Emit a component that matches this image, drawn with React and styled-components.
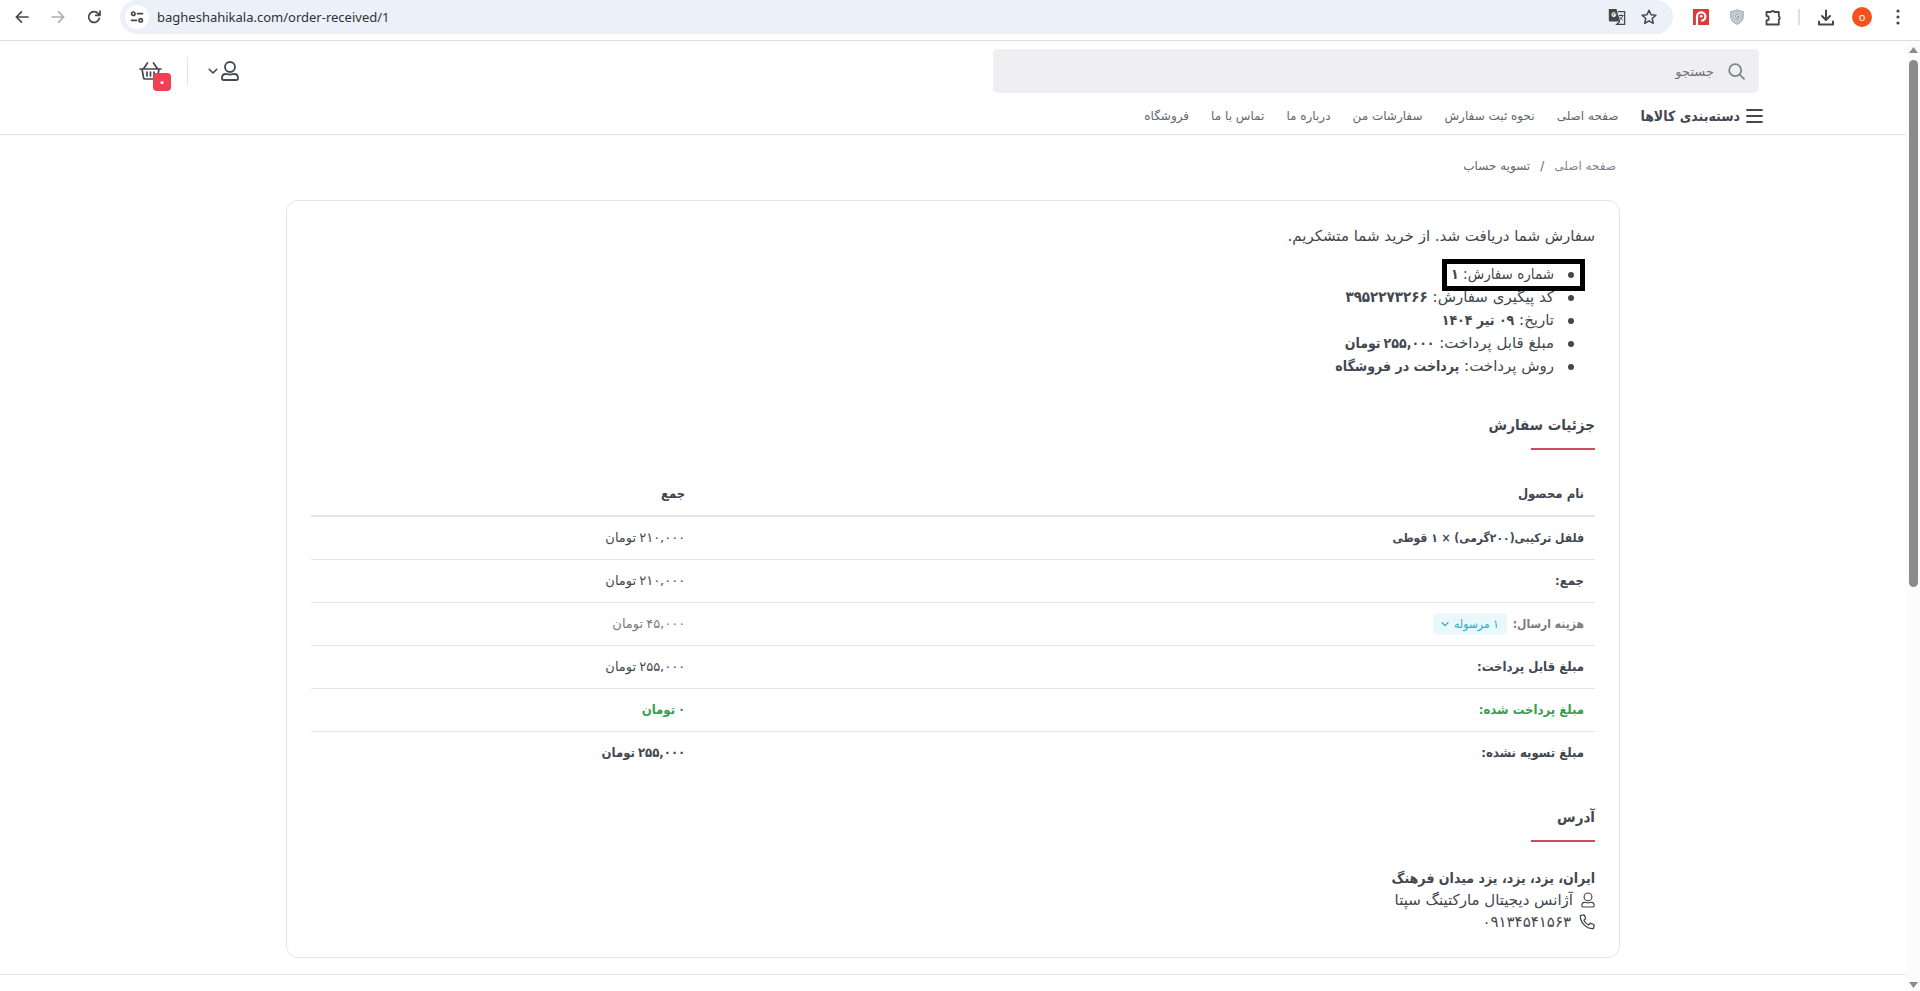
import React from "react";
import styled, { createGlobalStyle } from "styled-components";

const narrow = `"DejaVu Sans Condensed", "DejaVu Sans", sans-serif`;

const GlobalStyle = createGlobalStyle`
  *, *::before, *::after { box-sizing: border-box; }
  body { margin: 0; background: #fff; }
  button, input { font-family: inherit; }
  button { border: 0; padding: 0; background: none; color: inherit; cursor: pointer; }
  svg { display: block; flex: none; }
`;

/* ---------- browser chrome ---------- */

const Window = styled.div`
  height: 100vh;
  display: flex;
  flex-direction: column;
  overflow: hidden;
`;

const BrowserBar = styled.header`
  flex: none;
  display: flex;
  align-items: flex-start;
  height: 41px;
  padding: 0 10px;
  border-bottom: 1px solid #dadce0;
  background: #fff;
  color: #474747;
  font-family: "Noto Sans", "Open Sans", sans-serif;
`;

const BarGroup = styled.div`
  display: flex;
  align-items: center;
  height: 34px;
  gap: ${(p) => p.$gap}px;
`;

const ProfileGroup = styled(BarGroup)`
  padding-left: 2px;
`;

const BarButton = styled.button`
  display: flex;
  align-items: center;
  justify-content: center;
  width: 24px;
  height: 24px;
  border-radius: 50%;
  color: ${(p) => (p.$muted ? "#b0b0b0" : "#474747")};
`;

const Omnibox = styled.div`
  flex: 1;
  display: flex;
  align-items: center;
  height: 34px;
  margin: 0 16px 0 14px;
  padding: 0 12px 0 5px;
  border-radius: 17px;
  background: #ebf0f9;
`;

const SiteButton = styled(BarButton)`
  background: #fff;
`;

const Url = styled.input`
  flex: 1;
  min-width: 0;
  height: 22px;
  margin-left: 8px;
  padding: 0;
  border: 0;
  outline: 0;
  background: none;
  color: #303236;
  font-size: 13px;
  line-height: 20px;
`;

const BarDivider = styled.span`
  width: 2px;
  height: 16px;
  margin: 0 2px 0 1px;
  background: #d5dff0;
`;

const Avatar = styled.button`
  width: 20px;
  height: 20px;
  border-radius: 50%;
  background: #f4511e;
  color: #fff;
  font-size: 11px;
  line-height: 18px;
`;

const Viewport = styled.div`
  flex: 1;
  min-height: 0;
  display: flex;
`;

const ScrollTrack = styled.div`
  flex: none;
  width: 14px;
  display: flex;
  flex-direction: column;
  align-items: center;
  padding: 6px 0 3px;
  background: #fcfcfc;
`;

const ScrollThumb = styled.div`
  width: 9px;
  height: 56%;
  margin: 7px 0 auto;
  border-radius: 5px;
  background: #8b8b8b;
`;

/* ---------- shop page ---------- */

const Page = styled.div`
  flex: 1;
  min-width: 0;
  overflow: hidden;
  color: #424750;
  font-family: "DejaVu Sans", sans-serif;
  font-size: 15px;
  line-height: 22px;
`;

const SiteHeader = styled.header`
  border-bottom: 1px solid #e4e5e7;
  box-shadow: 0 1px 2px rgba(0, 0, 0, 0.03);
`;

const HeaderInner = styled.div`
  max-width: 1628px;
  margin: 0 auto;
`;

const HeaderRow = styled.div`
  display: flex;
  align-items: center;
  justify-content: space-between;
  padding: 8px 8px 0 0;
`;

const Search = styled.form`
  flex: 0 1 766px;
  display: flex;
  align-items: center;
  gap: 14px;
  height: 44px;
  padding: 0 14px;
  border-radius: 5px;
  background: #efeff1;
  color: #81858b;
`;

const SearchInput = styled.input`
  flex: 1;
  min-width: 0;
  padding: 0;
  border: 0;
  outline: 0;
  background: none;
  color: #424750;
  font-size: 13px;
  &::placeholder { color: #6f747b; opacity: 1; }
`;

const Actions = styled.div`
  display: flex;
  align-items: center;
`;

const AccountButton = styled.button`
  display: flex;
  align-items: center;
  gap: 3px;
  color: #424750;
`;

const ActionDivider = styled.span`
  width: 1px;
  height: 29px;
  margin: 0 20px;
  background: #e4e5e7;
`;

const CartButton = styled.button`
  position: relative;
  display: flex;
  width: 28px;
  height: 20px;
  justify-content: flex-end;
  color: #424750;
`;

const CartBadge = styled.span`
  position: absolute;
  left: 14px;
  top: 12px;
  width: 18px;
  height: 18px;
  border-radius: 4px;
  background: #ef4056;
  color: #fff;
  font-size: 15px;
  font-weight: 700;
  line-height: 18px;
  text-align: center;
`;

const Nav = styled.nav`
  display: flex;
  align-items: center;
  gap: 22px;
  height: 41px;
  padding: 5px 4px 0 0;
`;

const CategoryButton = styled.button`
  display: flex;
  align-items: center;
  gap: 6px;
  color: #424750;
  font-family: ${narrow};
  font-size: 14px;
  font-weight: 700;
`;

const NavLink = styled.a`
  color: #62666d;
  font-size: 12px;
  text-decoration: none;
  white-space: nowrap;
`;

const Container = styled.main`
  max-width: 1334px;
  margin: 0 auto;
`;

const Breadcrumb = styled.nav`
  display: flex;
  gap: 10px;
  padding: 20px 4px 0;
  font-size: 12px;
  color: #62666d;
`;

const Crumb = styled.a`
  color: #81858b;
  text-decoration: none;
`;

const Card = styled.section`
  margin: 23px 0 16px;
  padding: 24px;
  border: 1px solid #e4e5e7;
  border-radius: 12px;
`;

const Notice = styled.p`
  margin: 0 0 16px;
`;

const Summary = styled.ul`
  margin: 0 0 35px;
  padding: 0 21px 0 0;
  list-style: none;
  line-height: 23px;
`;

const SummaryItem = styled.li`
  position: relative;
  height: 23px;
  ${(p) => p.$narrow && `font-family: ${narrow};`}
  &::before {
    content: "";
    display: inline-block;
    width: 6px;
    height: 6px;
    margin-left: 14px;
    border-radius: 50%;
    background: #424750;
    vertical-align: middle;
  }
`;

const SummaryValue = styled.strong`
  font-family: ${narrow};
  font-size: ${(p) => (p.$digits ? 15 : 14)}px;
`;

const Highlight = styled.span`
  position: absolute;
  top: -4px;
  right: -11px;
  width: 143px;
  height: 32px;
  border: 5px solid #000;
  z-index: 1;
`;

const Unit = styled.span`
  margin-right: 3px;
`;

const SectionTitle = styled.h2`
  width: fit-content;
  margin: 0 0 ${(p) => p.$after}px;
  font-family: ${narrow};
  font-size: 15px;
  line-height: 24px;
  font-weight: 700;
  &::after {
    content: "";
    display: block;
    width: 64px;
    height: 2px;
    margin-top: 11px;
    background: #d04a5f;
  }
`;

const OrderTable = styled.table`
  width: 100%;
  margin-bottom: 31px;
  border-collapse: collapse;
  table-layout: fixed;
  font-size: 13px;
  line-height: 22px;
`;

const HeadCell = styled.th`
  width: ${(p) => p.$width};
  height: 44px;
  padding: 0 11px;
  border-bottom: 2px solid #e4e5e7;
  font-family: ${narrow};
  text-align: right;
`;

const toneColors = { normal: "#424750", muted: "#7b7b7b", success: "#34a04f" };

const Row = styled.tr`
  height: 43px;
  color: ${(p) => toneColors[p.$tone || "normal"]};
  & + & { border-top: 1px solid #e4e5e7; }
`;

const RowHead = styled.th`
  padding: 0 11px;
  font-family: ${narrow};
  font-size: ${(p) => (p.$small ? 12 : 13)}px;
  text-align: right;
`;

const Amount = styled.td`
  padding: 0 11px;
  text-align: right;
  ${(p) => p.$strong && `font-family: ${narrow}; font-weight: 700;`}
`;

const ShipCell = styled.div`
  display: flex;
  align-items: center;
  gap: 6px;
`;

const ParcelButton = styled.button`
  display: flex;
  align-items: center;
  justify-content: space-between;
  width: 74px;
  height: 22px;
  padding: 0 8px;
  border-radius: 5px;
  background: #e9f9fb;
  color: #19aebd;
  font-size: 12px;
`;

const AddressBlock = styled.address`
  font-style: normal;
`;

const AddressLine = styled.div`
  display: flex;
  align-items: center;
  gap: 8px;
  ${(p) => p.$strong && `font-family: ${narrow}; font-size: 14px; font-weight: 700;`}
`;

const Footer = styled.footer`
  border-top: 1px solid #e4e5e7;
  height: 40px;
`;

/* ---------- icons ---------- */

const Icon = ({ size = 20, width, height, box = "0 0 24 24", stroke = 2, children }) => (
  <svg
    width={width || size}
    height={height || size}
    viewBox={box}
    fill="none"
    stroke="currentColor"
    strokeWidth={stroke}
    strokeLinecap="round"
    strokeLinejoin="round"
    aria-hidden="true"
  >
    {children}
  </svg>
);

const UserIcon = ({ width, height, stroke }) => (
  <Icon width={width} height={height} box="0 0 18 20" stroke={stroke}>
    <circle cx="9" cy="6" r="5" />
    <path d="M1 17.2c0-2.6 1.6-4.2 3.8-4.2 1 0 1.9.6 4.2.6s3.2-.6 4.2-.6c2.2 0 3.8 1.6 3.8 4.2 0 1.1-.7 1.8-1.8 1.8H2.8C1.7 19 1 18.3 1 17.2z" />
  </Icon>
);

const ChevronIcon = ({ size }) => (
  <Icon width={size} height={size} box="0 0 10 10" stroke={1.6}>
    <path d="M1.2 3.3 5 7l3.8-3.7" />
  </Icon>
);

const BasketIcon = () => (
  <Icon width={23} height={20} box="0 0 23 20" stroke={1.7}>
    <path d="M1 8h21M8.5 2 4.5 7.800M14.5 2l4 5.800M3 8l1.500 8.500c.2 1 .7 1.500 1.700 1.500h10.600c1 0 1.500-.5 1.700-1.500L20 8" />
    <path d="M8 11v4M11.500 11v4M15 11v4" />
  </Icon>
);

const MenuIcon = () => (
  <Icon width={17} height={16} box="0 0 17 16" stroke={1.8}>
    <path d="M1 2h15M1 8h15M1 14h15" />
  </Icon>
);

const PhoneIcon = () => (
  <Icon width={16} height={16} box="0 0 16 16" stroke={1.3}>
    <path d="M2 1.300 4.400.8c.4-.1.7.1.9.5l1.200 2.800c.1.3 0 .7-.2.9L4.900 6.200c.9 2 2.500 3.700 4.700 4.800l1.300-1.500c.2-.3.6-.4.9-.2l2.900 1.200c.4.2.6.5.5.9l-.6 2.600c-.1.4-.4.7-.8.7C7.300 14.700 1.300 8.800 1.300 2.100c0-.4.3-.7.7-.8z" />
  </Icon>
);

const TranslateIcon = () => (
  <svg width="18" height="18" viewBox="0 0 18 18" fill="none" aria-hidden="true">
    <path d="M1 1h7.500l3.700 12.500H2A1.200 1.200 0 0 1 .8 12.300V1z" fill="#474747" />
    <path d="M8.500 6.200H6.100v1.300h1.100c-.2.7-.7 1-1.300 1A1.900 1.900 0 1 1 7.200 5.200" stroke="#fff" strokeWidth="1.1" />
    <path d="M10 3.700h6.600v12.600H8.800l3-2.800" stroke="#474747" strokeWidth="1.3" />
    <path d="M11 7.500h4.500M13.200 6.300v1.200M14.700 7.500c-.4 1.900-1.500 3.200-3 4.200M11.800 8.800c.7 1.600 1.600 2.500 2.900 3.300" stroke="#474747" strokeWidth="1" />
  </svg>
);

const PExtensionIcon = () => (
  <svg width="16" height="16" viewBox="0 0 16 16" fill="none" aria-hidden="true">
    <path fill="#d93b3b" d="M0 0h16v16H0z" />
    <path d="M4 16V7.500A4.200 4.200 0 1 1 8.200 11.700" stroke="#fff" strokeWidth="2.2" />
    <circle cx="8.200" cy="7.300" r="1.300" fill="#fff" />
  </svg>
);

const ShieldIcon = () => (
  <svg width="14" height="16" viewBox="0 0 14 16" fill="none" aria-hidden="true">
    <path d="M7 .7c1.800 1.200 3.900 1.600 6.200 1.600v5c0 3.800-2.300 6.500-6.200 8-3.900-1.500-6.200-4.200-6.200-8v-5C3.100 2.300 5.200 1.900 7 .7z" fill="#c9ced6" stroke="#9aa2ae" />
    <circle cx="7" cy="7.200" r="3.600" fill="#e6e9ee" stroke="#9aa2ae" strokeWidth=".8" />
    <path d="M8.500 5.800c-1.300-1-3-.3-3 1.400s1.700 2.300 3 1.400V7.300H7.200" stroke="#7e8a9c" />
  </svg>
);

const Price = ({ value }) => (
  <>
    {value}
    <Unit>تومان</Unit>
  </>
);

/* ---------- data ---------- */

const navItems = ["صفحه اصلی", "نحوه ثبت سفارش", "سفارشات من", "درباره ما", "تماس با ما", "فروشگاه"];

const summary = [
  { label: "شماره سفارش:", value: "۱", highlighted: true },
  { label: "کد پیگیری سفارش:", value: "۳۹۵۲۲۷۳۲۶۶", digits: true },
  { label: "تاریخ:", value: "۰۹ تیر ۱۴۰۴" },
  { label: "مبلغ قابل پرداخت:", value: <Price value="۲۵۵,۰۰۰" /> },
  { label: "روش پرداخت:", value: "پرداخت در فروشگاه" },
];

const rows = [
  { label: "فلفل ترکیبی(۲۰۰گرمی) × ۱ قوطی", amount: "۲۱۰,۰۰۰", small: true },
  { label: "جمع:", amount: "۲۱۰,۰۰۰" },
  { label: "هزینه ارسال:", amount: "۴۵,۰۰۰", tone: "muted", parcels: "۱ مرسوله", small: true },
  { label: "مبلغ قابل پرداخت:", amount: "۲۵۵,۰۰۰" },
  { label: "مبلغ پرداخت شده:", amount: "۰", tone: "success", strong: true },
  { label: "مبلغ تسویه نشده:", amount: "۲۵۵,۰۰۰", strong: true },
];

/* ---------- sections ---------- */

const Browser = () => (
  <BrowserBar>
    <BarGroup $gap={12}>
      <BarButton aria-label="Back">
        <Icon size={14} box="0 0 14 14" stroke={1.7}><path d="M13 7H1.500M6.500 1.800 1.300 7l5.200 5.200" /></Icon>
      </BarButton>
      <BarButton aria-label="Forward" $muted>
        <Icon size={14} box="0 0 14 14" stroke={1.7}><path d="M1 7h11.500M7.500 1.800 12.700 7l-5.200 5.200" /></Icon>
      </BarButton>
      <BarButton aria-label="Reload">
        <Icon size={14} box="0 0 14 14" stroke={1.7}><path d="M12.300 8.300A5.400 5.400 0 1 1 11.300 3.700L12.700 5M13 1v4.300H8.700" /></Icon>
      </BarButton>
    </BarGroup>
    <Omnibox>
      <SiteButton aria-label="Site information">
        <Icon size={14} box="0 0 14 14" stroke={1.7}>
          <circle cx="3.300" cy="3.700" r="1.700" /><path d="M7.500 3.700h5M1.500 10.300h5" /><circle cx="10.700" cy="10.300" r="1.700" />
        </Icon>
      </SiteButton>
      <Url aria-label="Address" defaultValue="bagheshahikala.com/order-received/1" />
      <BarGroup $gap={8}>
        <BarButton aria-label="Translate"><TranslateIcon /></BarButton>
        <BarButton aria-label="Bookmark">
          <Icon size={18} stroke={2}><path d="m12 3 2.700 6 6.500.7-4.900 4.300 1.400 6.500-5.700-3.400-5.700 3.400 1.400-6.500-4.900-4.300 6.500-.7z" /></Icon>
        </BarButton>
      </BarGroup>
    </Omnibox>
    <BarGroup $gap={12}>
      <BarButton aria-label="P extension"><PExtensionIcon /></BarButton>
      <BarButton aria-label="Shield extension"><ShieldIcon /></BarButton>
      <BarButton aria-label="Extensions">
        <Icon width={17} height={17} box="0 0 17 17" stroke={1.8}>
          <path d="M1.500 3H6a1.800 1.500 0 0 1 3.400 0h4.400v4.300a1.500 1.800 0 0 1 0 3.400V15.500H1.500v-4a2.300 2.300 0 0 0 0-4.600z" />
        </Icon>
      </BarButton>
      <BarDivider />
      <BarButton aria-label="Downloads">
        <Icon width={20} height={17} box="0 0 17 17" stroke={2}><path d="M8.500 1.500v9M4.500 7l4 4 4-4M1.500 12.500v3h14v-3" /></Icon>
      </BarButton>
      <ProfileGroup $gap={14}>
        <Avatar aria-label="Profile">o</Avatar>
        <BarButton aria-label="Menu">
          <svg width="4" height="16" viewBox="0 0 4 16" fill="currentColor"><circle cx="2" cy="2" r="1.600" /><circle cx="2" cy="8" r="1.600" /><circle cx="2" cy="14" r="1.600" /></svg>
        </BarButton>
      </ProfileGroup>
    </BarGroup>
  </BrowserBar>
);

const ShopHeader = () => (
  <SiteHeader>
    <HeaderInner>
      <HeaderRow>
        <Search role="search">
          <Icon size={17} box="0 0 17 17" stroke={1.8}><circle cx="7.200" cy="7.200" r="6" /><path d="m11.700 11.700 4.300 4.100" /></Icon>
          <SearchInput aria-label="جستجو" placeholder="جستجو" />
        </Search>
        <Actions>
          <AccountButton aria-label="حساب کاربری">
            <UserIcon width={18} height={20} stroke={1.8} />
            <ChevronIcon size={10} />
          </AccountButton>
          <ActionDivider />
          <CartButton aria-label="سبد خرید">
            <BasketIcon />
            <CartBadge>۰</CartBadge>
          </CartButton>
        </Actions>
      </HeaderRow>
      <Nav>
        <CategoryButton><MenuIcon />دسته‌بندی کالاها</CategoryButton>
        {navItems.map((item) => <NavLink key={item} href="#">{item}</NavLink>)}
      </Nav>
    </HeaderInner>
  </SiteHeader>
);

export default function App() {
  return (
    <Window>
      <GlobalStyle />
      <Browser />
      <Viewport>
        <Page dir="rtl" lang="fa">
          <ShopHeader />
          <Container>
            <Breadcrumb>
              <Crumb href="#">صفحه اصلی</Crumb>
              <span>/</span>
              <span>تسویه حساب</span>
            </Breadcrumb>
            <Card>
              <Notice>سفارش شما دریافت شد. از خرید شما متشکریم.</Notice>
              <Summary>
                {summary.map(({ label, value, highlighted, digits }) => (
                  <SummaryItem key={label} $narrow={highlighted}>
                    {label} <SummaryValue $digits={digits}>{value}</SummaryValue>
                    {highlighted && <Highlight />}
                  </SummaryItem>
                ))}
              </Summary>
              <SectionTitle $after={22}>جزئیات سفارش</SectionTitle>
              <OrderTable>
                <thead>
                  <tr>
                    <HeadCell scope="col" $width="70%">نام محصول</HeadCell>
                    <HeadCell scope="col" $width="30%">جمع</HeadCell>
                  </tr>
                </thead>
                <tbody>
                  {rows.map(({ label, amount, tone, strong, parcels, small }) => (
                    <Row key={label} $tone={tone}>
                      <RowHead scope="row" $small={small}>
                        {parcels ? (
                          <ShipCell>
                            {label}
                            <ParcelButton>{parcels}<ChevronIcon size={8} /></ParcelButton>
                          </ShipCell>
                        ) : label}
                      </RowHead>
                      <Amount $strong={strong}><Price value={amount} /></Amount>
                    </Row>
                  ))}
                </tbody>
              </OrderTable>
              <SectionTitle $after={25}>آدرس</SectionTitle>
              <AddressBlock>
                <AddressLine $strong>ایران، یزد، یزد، یزد میدان فرهنگ</AddressLine>
                <AddressLine><UserIcon width={14} height={16} stroke={1.5} />آژانس دیجیتال مارکتینگ سپتا</AddressLine>
                <AddressLine><PhoneIcon />۰۹۱۳۴۵۴۱۵۶۳</AddressLine>
              </AddressBlock>
            </Card>
          </Container>
          <Footer />
        </Page>
        <ScrollTrack>
          <svg width="9" height="6" viewBox="0 0 9 6" fill="#8b8b8b"><path d="M4.500 0 9 6H0z" /></svg>
          <ScrollThumb />
          <svg width="9" height="6" viewBox="0 0 9 6" fill="#8b8b8b"><path d="M4.500 6 9 0H0z" /></svg>
        </ScrollTrack>
      </Viewport>
    </Window>
  );
}
